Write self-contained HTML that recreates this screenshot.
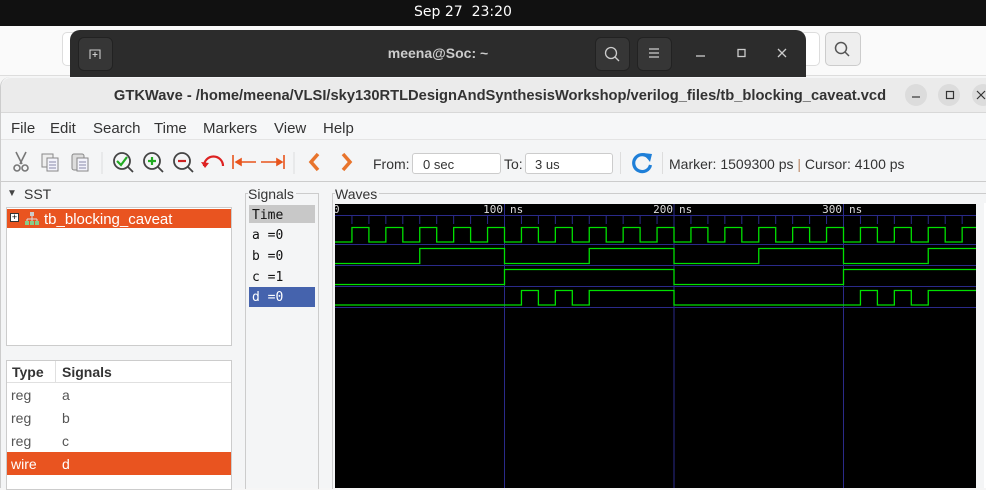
<!DOCTYPE html>
<html><head><meta charset="utf-8">
<style>
*{margin:0;padding:0;box-sizing:border-box}
body{width:986px;height:488px;overflow:hidden;background:#f6f6f6;font-family:"Liberation Sans","DejaVu Sans",sans-serif;position:relative;color:#333}
.a{position:absolute}
.t{position:absolute;white-space:nowrap}
.mono{font-family:"DejaVu Sans Mono","Liberation Mono",monospace}
</style></head><body>
<div class="a" style="left:0;top:0;width:986px;height:26px;background:#111"></div>
<div class="t" style="left:0;width:926px;text-align:center;top:4px;color:#fff;font-size:14px;font-family:'DejaVu Sans',sans-serif">Sep 27&nbsp; 23:20</div>
<div class="a" style="left:0;top:26px;width:986px;height:50px;background:#fafafa;border-bottom:1px solid #ddd"></div>
<div class="a" style="left:62px;top:32px;width:260px;height:34px;border:1px solid #ddd;border-radius:5px;background:#fff"></div>
<div class="a" style="left:800px;top:32px;width:20px;height:34px;border:1px solid #ddd;border-radius:5px;background:#fff"></div>
<div class="a" style="left:825px;top:32px;width:36px;height:34px;border:1px solid #ccc;border-radius:5px;background:#eee"></div>
<svg class="a" style="left:833px;top:40px" width="18" height="18"><circle cx="8" cy="8" r="5.5" fill="none" stroke="#555" stroke-width="1.5"/><line x1="12" y1="12" x2="16" y2="16" stroke="#555" stroke-width="1.5"/></svg>
<div class="a" style="left:70px;top:30px;width:736px;height:48px;background:#2c2c2c;border-radius:10px 10px 0 0"></div>
<div class="a" style="left:78px;top:37px;width:35px;height:34px;background:#363636;border:1px solid #222;border-radius:6px"></div>
<svg class="a" style="left:86px;top:45px" width="18" height="18"><path d="M4 14V5H14V14M6.5 9.5H11.5M9 7V12" stroke="#ccc" stroke-width="1.1" fill="none"/></svg>
<div class="t" style="left:300px;width:276px;text-align:center;top:45px;color:#ccc;font-weight:bold;font-size:14px">meena@Soc: ~</div>
<div class="a" style="left:595px;top:37px;width:35px;height:34px;background:#363636;border:1px solid #222;border-radius:6px"></div>
<svg class="a" style="left:603px;top:45px" width="18" height="18"><circle cx="8" cy="8" r="5.5" fill="none" stroke="#ccc" stroke-width="1.3"/><line x1="12" y1="12" x2="16" y2="16" stroke="#ccc" stroke-width="1.3"/></svg>
<div class="a" style="left:637px;top:37px;width:35px;height:34px;background:#363636;border:1px solid #222;border-radius:6px"></div>
<svg class="a" style="left:647px;top:47px" width="14" height="12"><path d="M2 2H12M2 6H12M2 10H12" stroke="#ccc" stroke-width="1.2"/></svg>
<svg class="a" style="left:692px;top:44px" width="100" height="20"><path d="M4 12H13" stroke="#ccc" stroke-width="1.3"/><rect x="46" y="5.5" width="7" height="7" fill="none" stroke="#ccc" stroke-width="1.3"/><path d="M86 5L94 13M94 5L86 13" stroke="#ccc" stroke-width="1.3"/></svg>
<div class="a" style="left:0;top:77px;width:986px;height:411px;background:#f4f5f6;border-left:1px solid #ccc;border-radius:10px 0 0 0"></div>
<div class="a" style="left:1px;top:78px;width:985px;height:35px;background:#ebebeb;border-bottom:1px solid #d8d8d8;border-radius:10px 0 0 0"></div>
<div class="t" style="left:0;width:1000px;text-align:center;top:88px;font-weight:bold;font-size:14.7px;color:#333">GTKWave - /home/meena/VLSI/sky130RTLDesignAndSynthesisWorkshop/verilog_files/tb_blocking_caveat.vcd</div>
<div class="a" style="left:905px;top:84px;width:22px;height:22px;border-radius:11px;background:#dcdcdc"></div>
<div class="a" style="left:938px;top:84px;width:22px;height:22px;border-radius:11px;background:#dcdcdc"></div>
<div class="a" style="left:972px;top:84px;width:22px;height:22px;border-radius:11px;background:#dcdcdc"></div>
<svg class="a" style="left:905px;top:84px" width="81" height="22"><path d="M7 13H15" stroke="#333" stroke-width="1.2"/><rect x="41.5" y="7.5" width="7" height="7" fill="none" stroke="#333" stroke-width="1.2"/><path d="M72 7L80 15M80 7L72 15" stroke="#333" stroke-width="1.2"/></svg>
<div class="a" style="left:1px;top:113px;width:985px;height:27px;background:#f6f7f8;border-bottom:1px solid #e4e4e4"></div>
<div class="t" style="left:11px;top:120px;font-size:15px">File</div>
<div class="t" style="left:50px;top:120px;font-size:15px">Edit</div>
<div class="t" style="left:93px;top:120px;font-size:15px">Search</div>
<div class="t" style="left:154px;top:120px;font-size:15px">Time</div>
<div class="t" style="left:203px;top:120px;font-size:15px">Markers</div>
<div class="t" style="left:274px;top:120px;font-size:15px">View</div>
<div class="t" style="left:323px;top:120px;font-size:15px">Help</div>
<svg class="a" style="left:0;top:140px" width="370" height="42">
 <g stroke="#777" fill="none" stroke-width="1.6"><path d="M16 12L22 24M26 12L20 24"/><circle cx="17" cy="28" r="3"/><circle cx="25" cy="28" r="3"/></g>
 <g stroke="#888" fill="#eee"><rect x="42" y="14" width="11" height="13"/><rect x="47" y="18" width="11" height="13" fill="#f3f3fb"/><path d="M49 22H56M49 25H56M49 28H56" stroke="#88a"/></g>
 <g stroke="#888" fill="#ddd"><rect x="72" y="14" width="12" height="16" rx="2"/><rect x="77" y="18" width="11" height="13" fill="#f3f3fb"/><path d="M79 22H86M79 25H86M79 28H86" stroke="#88a"/></g>
 <line x1="102" y1="12" x2="102" y2="34" stroke="#ddd"/>
 <g fill="none" stroke="#444" stroke-width="1.8"><circle cx="122" cy="21" r="8"/><path d="M128 27L133 32"/><circle cx="152" cy="21" r="8"/><path d="M158 27L163 32"/><circle cx="182" cy="21" r="8"/><path d="M188 27L193 32"/></g>
 <path d="M117 21L121 25L127 17" stroke="#2a2" stroke-width="2.2" fill="none"/>
 <path d="M148 21H156M152 17V25" stroke="#2a2" stroke-width="2.2"/>
 <path d="M178 21H186" stroke="#c22" stroke-width="2.2"/>
 <path d="M204 26A8 8 0 0 1 223 26" stroke="#d22" stroke-width="2.2" fill="none"/><path d="M201 22L205 28L209 23Z" fill="#d22"/>
 <g stroke="#e8541c" stroke-width="1.6" fill="#e8541c"><path d="M233 15V29M236 22H256"/><path d="M236 22L241 19V25Z"/><path d="M284 15V29M261 22H281"/><path d="M282 22L277 19V25Z"/></g>
 <line x1="294" y1="12" x2="294" y2="34" stroke="#ddd"/>
 <path d="M318 14L311 22L318 30" stroke="#e8742c" stroke-width="3.5" fill="none"/>
 <path d="M343 14L350 22L343 30" stroke="#e8742c" stroke-width="3.5" fill="none"/>
</svg>
<div class="t" style="left:373px;top:156px;font-size:14px">From:</div>
<div class="a" style="left:412px;top:153px;width:89px;height:21px;background:#fff;border:1px solid #ccc;border-radius:3px"></div>
<div class="t" style="left:423px;top:157px;font-size:13px">0 sec</div>
<div class="t" style="left:504px;top:156px;font-size:14px">To:</div>
<div class="a" style="left:525px;top:153px;width:88px;height:21px;background:#fff;border:1px solid #ccc;border-radius:3px"></div>
<div class="t" style="left:535px;top:157px;font-size:13px">3 us</div>
<div class="a" style="left:620px;top:152px;width:1px;height:22px;background:#ddd"></div>
<svg class="a" style="left:629px;top:150px" width="26" height="26"><path d="M20 8A8.5 8.5 0 1 0 21.5 15" stroke="#1e7fd8" stroke-width="3.2" fill="none"/><path d="M14 3L23 4L21 12Z" fill="#1e7fd8"/></svg>
<div class="a" style="left:662px;top:152px;width:1px;height:22px;background:#ddd"></div>
<div class="t" style="left:669px;top:156px;font-size:14px">Marker: 1509300 ps&nbsp;<span style="color:#b86">|</span>&nbsp;Cursor: 4100 ps</div>
<div class="a" style="left:0;top:181px;width:986px;height:1px;background:#ccc"></div>
<div class="t" style="left:7px;top:188px;font-size:10px;color:#444">▼</div>
<div class="t" style="left:24px;top:186px;font-size:14px">SST</div>
<div class="a" style="left:6px;top:207px;width:226px;height:139px;background:#fff;border:1px solid #ccc"></div>
<div class="a" style="left:7px;top:209px;width:224px;height:19px;background:#e95420"></div>
<div class="a" style="left:10px;top:213px;width:9px;height:9px;border:1px solid #333;background:#fff;font-size:9px;line-height:7px;text-align:center;color:#000">+</div>
<svg class="a" style="left:24px;top:211px" width="16" height="15"><rect x="6" y="1" width="4" height="4" fill="#ccc"/><path d="M8 5V8M3 8H13M3 8V10M8 8V10M13 8V10" stroke="#ddd"/><rect x="1" y="10" width="4" height="4" fill="#8c8"/><rect x="6" y="10" width="4" height="4" fill="#8c8"/><rect x="11" y="10" width="4" height="4" fill="#8c8"/></svg>
<div class="t" style="left:44px;top:211px;font-size:15px;color:#fff">tb_blocking_caveat</div>
<div class="a" style="left:6px;top:360px;width:226px;height:130px;background:#fff;border:1px solid #ccc"></div>
<div class="a" style="left:7px;top:361px;width:224px;height:22px;border-bottom:1px solid #e0e0e0"></div>
<div class="a" style="left:55px;top:361px;width:1px;height:22px;background:#e0e0e0"></div>
<div class="t" style="left:12px;top:364px;font-size:14px;font-weight:bold">Type</div>
<div class="t" style="left:62px;top:364px;font-size:14px;font-weight:bold">Signals</div>
<div class="t" style="left:11px;top:387px;font-size:14px;color:#555">reg</div><div class="t" style="left:62px;top:387px;font-size:14px;color:#555">a</div>
<div class="t" style="left:11px;top:410px;font-size:14px;color:#555">reg</div><div class="t" style="left:62px;top:410px;font-size:14px;color:#555">b</div>
<div class="t" style="left:11px;top:433px;font-size:14px;color:#555">reg</div><div class="t" style="left:62px;top:433px;font-size:14px;color:#555">c</div>
<div class="a" style="left:7px;top:452px;width:224px;height:23px;background:#e95420"></div>
<div class="t" style="left:11px;top:456px;font-size:14px;color:#fff">wire</div><div class="t" style="left:62px;top:456px;font-size:14px;color:#fff">d</div>
<div class="a" style="left:245px;top:193px;width:74px;height:296px;border:1px solid #ccc;border-bottom:none"></div>
<div class="t" style="left:248px;top:186px;font-size:14px;background:#f4f5f6;padding-right:2px">Signals</div>
<div class="a" style="left:249px;top:205px;width:66px;height:18px;background:#c8c8c8"></div>
<div class="t mono" style="left:252px;top:208px;font-size:13px;color:#111">Time</div>
<div class="t mono" style="left:252px;top:228px;font-size:13px;color:#111">a =0</div>
<div class="t mono" style="left:252px;top:249px;font-size:13px;color:#111">b =0</div>
<div class="t mono" style="left:252px;top:270px;font-size:13px;color:#111">c =1</div>
<div class="a" style="left:249px;top:287px;width:66px;height:20px;background:#4563ad"></div>
<div class="t mono" style="left:252px;top:290px;font-size:13px;color:#fff">d =0</div>
<div class="a" style="left:332px;top:193px;width:654px;height:296px;border:1px solid #ccc;border-bottom:none;border-right:none"></div>
<div class="t" style="left:335px;top:186px;font-size:14px;background:#f4f5f6;padding-right:2px">Waves</div>
<div class="a" style="left:984px;top:203px;width:2px;height:285px;background:#fff"></div>
<svg class="a" style="left:335px;top:204px" width="641" height="284" viewBox="335 204 641 284">
 <rect x="335" y="204" width="641" height="284" fill="#000"/>
 <g stroke="#2a2a8a" stroke-width="1" fill="none">
  <path d="M335 215.5H976M335 244.5H976M335 265.5H976M335 286.5H976M335 307.5H976"/>
  <path d="M504.5 204V488M674 204V488M843.5 204V488"/>
  <path d="M351.95 215v9M368.9 215v9M385.85 215v9M402.8 215v9M419.75 215v9M436.7 215v9M453.65 215v9M470.6 215v9M487.55 215v9M521.45 215v9M538.4 215v9M555.35 215v9M572.3 215v9M589.25 215v9M606.2 215v9M623.15 215v9M640.1 215v9M657.05 215v9M690.95 215v9M707.9 215v9M724.85 215v9M741.8 215v9M758.75 215v9M775.7 215v9M792.65 215v9M809.6 215v9M826.55 215v9M860.45 215v9M877.4 215v9M894.35 215v9M911.3 215v9M928.25 215v9M945.2 215v9M962.15 215v9"/>
 </g>
 <g font-family="DejaVu Sans Mono,Liberation Mono,monospace" font-size="11" fill="#ddd">
  <text x="333" y="213">0</text>
  <text x="503" y="213" text-anchor="end">100</text><text x="510" y="213">ns</text>
  <text x="673" y="213" text-anchor="end">200</text><text x="679" y="213">ns</text>
  <text x="842" y="213" text-anchor="end">300</text><text x="849" y="213">ns</text>
 </g>
 <g stroke="#00e000" stroke-width="1.3" fill="none">
  <path d="M335 242H351.95 v-14.5h16.95v14.5h16.95 v-14.5h16.95v14.5h16.95 v-14.5h16.95v14.5h16.95 v-14.5h16.95v14.5h16.95 v-14.5h16.95v14.5h16.95 v-14.5h16.95v14.5h16.95 v-14.5h16.95v14.5h16.95 v-14.5h16.95v14.5h16.95 v-14.5h16.95v14.5h16.95 v-14.5h16.95v14.5h16.95 v-14.5h16.95v14.5h16.95 v-14.5h16.95v14.5h16.95 v-14.5h16.95v14.5h16.95 v-14.5h16.95v14.5h16.95 v-14.5h16.95v14.5h16.95 v-14.5h16.95v14.5h16.95 v-14.5h16.95v14.5h16.95 v-14.5h16.95v14.5h16.95 v-14.5h16.95v14.5h16.95"/>
  <path d="M335 263.5H419.75V248.5H504.5V263.5H589.25V248.5H674V263.5H758.75V248.5H843.5V263.5H928.25V248.5H976"/>
  <path d="M335 284.5H504.5V269.5H674V284.5H843.5V269.5H976"/>
  <path d="M335 305H521.45V290.5H538.4V305H555.35V290.5H572.3V305H589.25V290.5H674V305H860.45V290.5H877.4V305H894.35V290.5H911.3V305H928.25V290.5H976"/>
 </g>
</svg>
</body></html>
